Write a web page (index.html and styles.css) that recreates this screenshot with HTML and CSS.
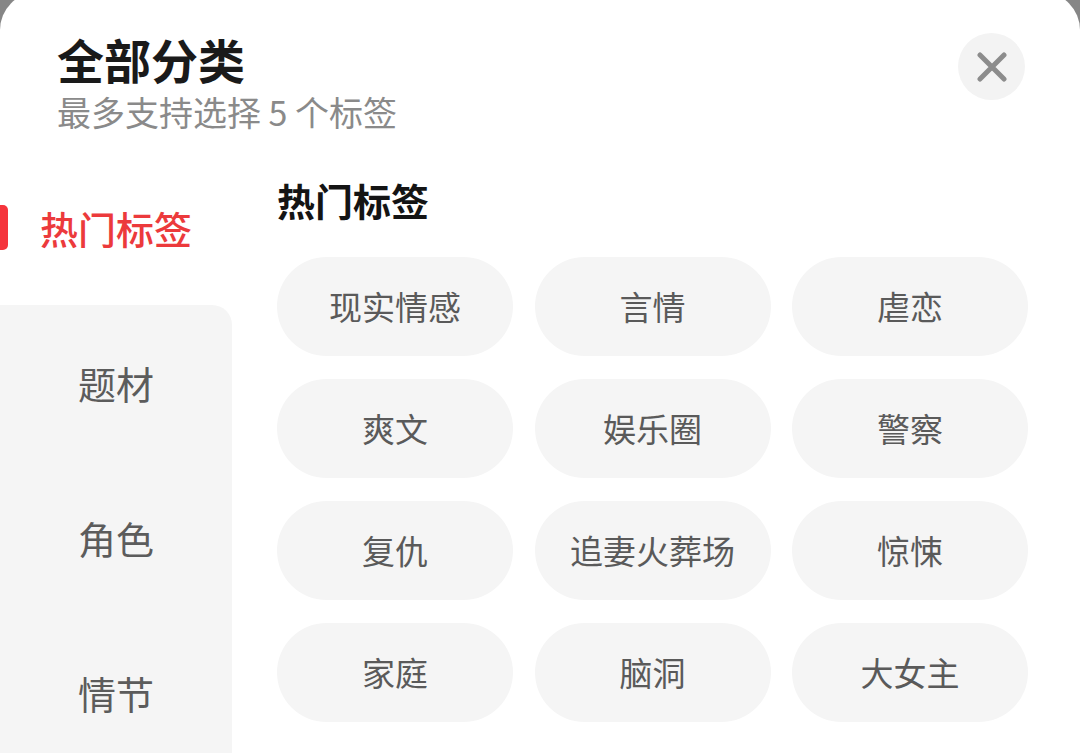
FILE: index.html
```html
<!DOCTYPE html>
<html lang="zh-CN">
<head>
<meta charset="utf-8">
<title>全部分类</title>
<link rel="stylesheet" href="styles.css">
</head>
<body>
<div class="sheet">
  <header class="header">
    <div class="heading">
      <h1 class="title">全部分类</h1>
      <p class="subtitle">最多支持选择 5 个标签</p>
    </div>
    <button class="close" aria-label="关闭">
      <svg width="30" height="30" viewBox="0 0 30 30"><path d="M3 3L27 27M27 3L3 27" stroke="#8c8c8c" stroke-width="5" stroke-linecap="round" fill="none"/></svg>
    </button>
  </header>
  <main class="main">
    <nav class="sidebar">
      <div class="side-item active">热门标签</div>
      <div class="side-list">
        <div class="side-item">题材</div>
        <div class="side-item">角色</div>
        <div class="side-item">情节</div>
      </div>
    </nav>
    <section class="content">
      <h2 class="section-title">热门标签</h2>
      <div class="chips">
        <div class="chip">现实情感</div>
        <div class="chip">言情</div>
        <div class="chip">虐恋</div>
        <div class="chip">爽文</div>
        <div class="chip">娱乐圈</div>
        <div class="chip">警察</div>
        <div class="chip">复仇</div>
        <div class="chip">追妻火葬场</div>
        <div class="chip">惊悚</div>
        <div class="chip">家庭</div>
        <div class="chip">脑洞</div>
        <div class="chip">大女主</div>
      </div>
    </section>
  </main>
</div>
</body>
</html>
```

FILE: styles.css
```css
* { box-sizing: border-box; }
html, body {
  margin: 0;
  padding: 0;
  height: 100%;
  overflow: hidden;
}
body {
  background: #868686;
  font-family: "Noto Sans CJK SC", "Noto Sans", sans-serif;
}
.sheet {
  margin-top: -8px;
  height: 761px;
  background: #ffffff;
  border-radius: 38px 38px 0 0;
  overflow: hidden;
  display: flex;
  flex-direction: column;
}
.header {
  display: flex;
  justify-content: space-between;
  align-items: flex-start;
  padding: 43px 55px 0 57px;
}
.title {
  margin: 0;
  font-size: 47px;
  line-height: 47px;
  font-weight: 700;
  color: #1a1a1a;
}
.subtitle {
  margin: 13px 0 0;
  font-size: 34px;
  line-height: 34px;
  color: #8a8a8a;
}
.close {
  width: 67px;
  height: 67px;
  margin-top: -2px;
  border: none;
  border-radius: 50%;
  background: #f3f3f3;
  display: flex;
  align-items: center;
  justify-content: center;
  padding: 0;
}
.close svg { display: block; }
.main {
  flex: 1;
  display: flex;
  margin-top: 21px;
}
.sidebar {
  width: 232px;
  flex: none;
  display: flex;
  flex-direction: column;
}
.side-item {
  height: 155px;
  display: flex;
  align-items: center;
  justify-content: center;
  font-size: 38px;
  line-height: 38px;
  color: #5c5c5c;
}
.side-item.active {
  position: relative;
  color: #ec3a3c;
  font-weight: 500;
}
.side-item.active::before {
  content: "";
  position: absolute;
  left: 0;
  top: 55px;
  width: 8px;
  height: 45px;
  background: #f5343c;
  border-radius: 0 5px 5px 0;
}
.side-list {
  flex: 1;
  background: #f5f5f5;
  border-top-right-radius: 20px;
}
.content {
  flex: 1;
  padding-left: 45px;
  padding-right: 52px;
}
.section-title {
  margin: 31px 0 0;
  font-size: 38px;
  line-height: 38px;
  font-weight: 600;
  color: #141414;
}
.chips {
  margin-top: 38px;
  display: grid;
  grid-template-columns: repeat(3, 236px);
  column-gap: 21.5px;
  row-gap: 23px;
}
.chip {
  height: 99px;
  border-radius: 50px;
  background: #f5f5f5;
  display: flex;
  align-items: center;
  justify-content: center;
  font-size: 33px;
  line-height: 33px;
  color: #5a5a5a;
}
```
